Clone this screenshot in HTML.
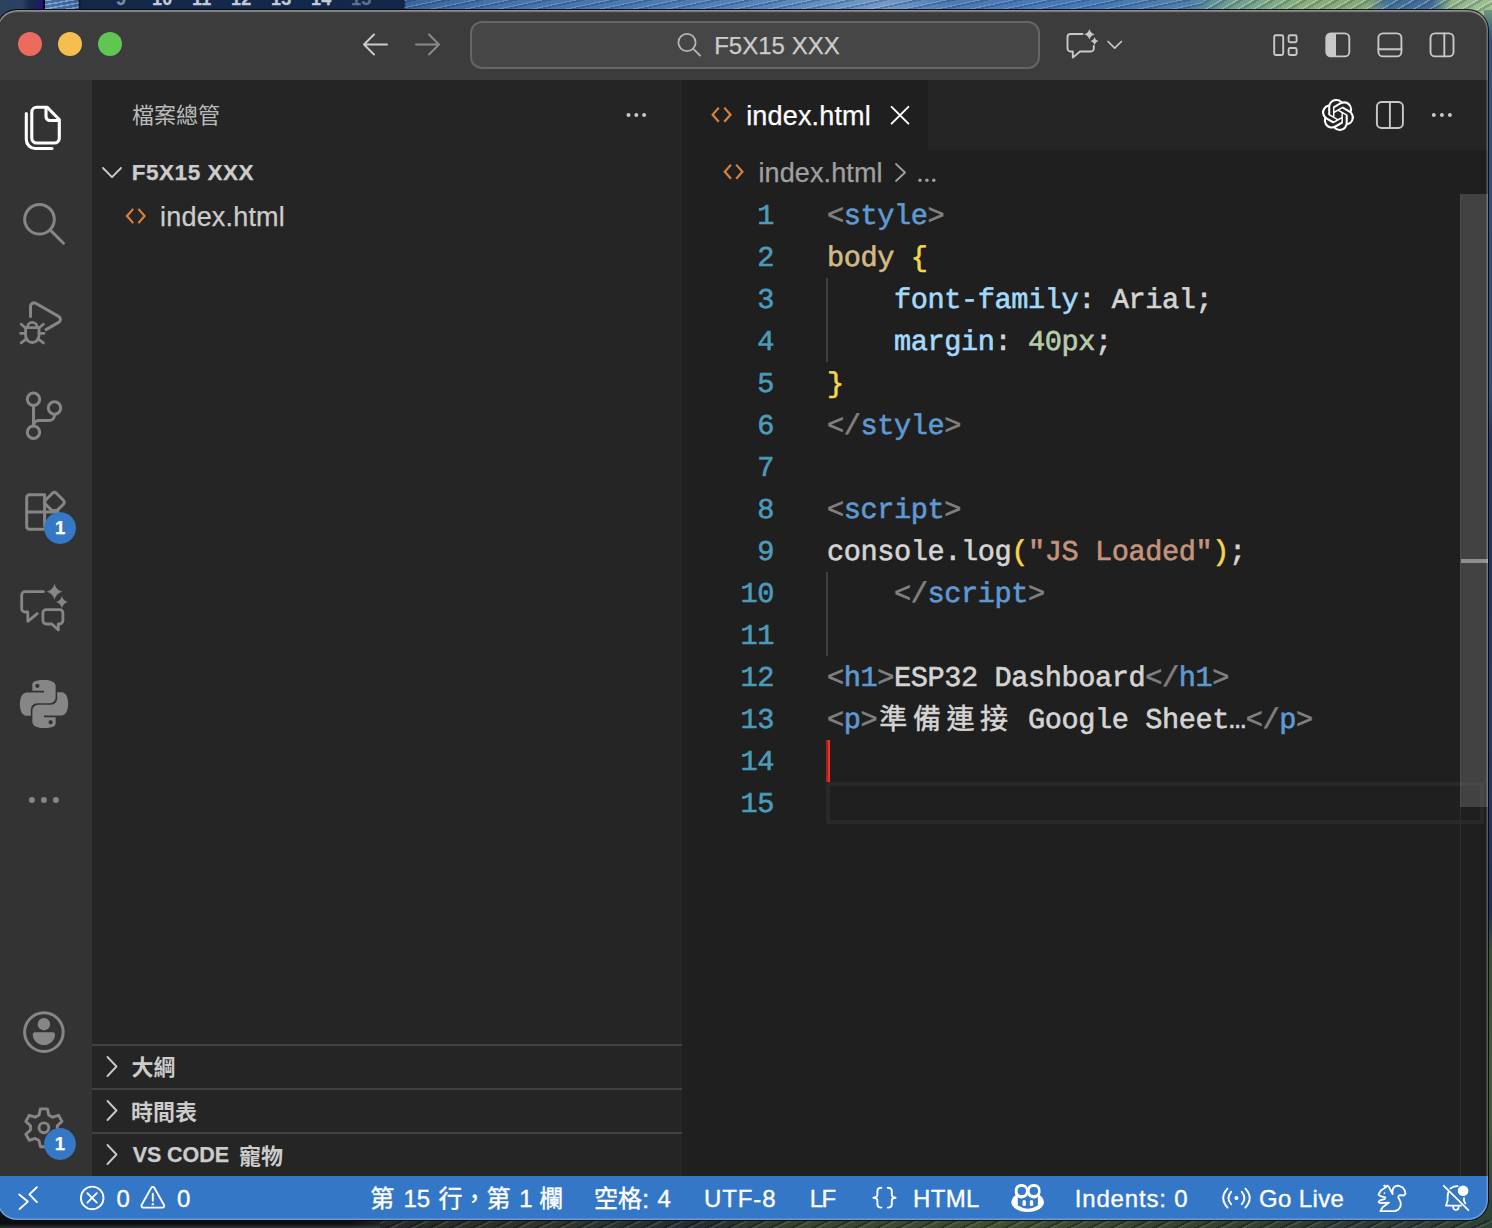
<!DOCTYPE html>
<html lang="zh-Hant">
<head>
<meta charset="utf-8">
<title>index.html — F5X15 XXX</title>
<style>
*{box-sizing:border-box;margin:0;padding:0}
html,body{width:1492px;height:1228px;overflow:hidden;background:#1c2a44;font-family:"Liberation Sans",sans-serif}
.abs{position:absolute}
#desk{position:absolute;left:0;top:0;width:1492px;height:1228px;overflow:hidden}
#win{position:absolute;left:-3px;top:10px;width:1491px;height:1210px;border-radius:20px;overflow:hidden;background:#1f1f1f;box-shadow:0 0 0 1px rgba(0,0,0,.85)}
#in{position:absolute;left:3px;top:0;width:1488px;height:1210px}
#rim{position:absolute;left:0;top:0;width:100%;height:100%;border-radius:20px;box-shadow:inset 0 0 0 1.5px rgba(255,255,255,.27),inset 0 2.2px 0 rgba(255,255,255,.2)}
#title{position:absolute;left:-3px;top:0;width:1491px;height:70px;background:#3c3c3c}
#title>*{margin-left:3px}
.tl{position:absolute;top:22px;width:24px;height:24px;border-radius:50%}
#search{position:absolute;left:470px;top:11px;width:570px;height:48px;border-radius:12px;background:#464646;border:2px solid #656565}
#activity{position:absolute;left:-3px;top:70px;width:95px;height:1096px;background:#333333}
#side{position:absolute;left:92px;top:70px;width:590px;height:1096px;background:#252526}
#sideborder{position:absolute;left:682px;top:70px;width:2px;height:1096px;background:#1f1f1f}
#editor{position:absolute;left:684px;top:70px;width:804px;height:1096px;background:#1f1f1f}
#tabs{position:absolute;left:0;top:0;width:100%;height:70px;background:#252526}
#tab{position:absolute;left:0;top:0;width:244px;height:70px;background:#1f1f1f}
#status{position:absolute;left:-3px;top:1166px;width:1491px;height:44px;background:#3477c7;color:#fff;font-size:24px}
.t{position:absolute;white-space:pre;line-height:1;-webkit-text-stroke-width:0.25px}
.w{-webkit-text-stroke:0.35px #fff}
.h{opacity:0;overflow:hidden;max-width:200px}
.code{position:absolute;left:143px;white-space:pre;font-family:"Liberation Mono",monospace;font-size:28.6px;letter-spacing:-0.41px;line-height:42px;height:42px;color:#d4d4d4;text-rendering:geometricPrecision;-webkit-text-stroke:0.6px}
.ln{position:absolute;left:0;width:90px;text-align:right;font-family:"Liberation Mono",monospace;font-size:28.6px;letter-spacing:-0.41px;line-height:42px;height:42px;color:#4c9bba;text-rendering:geometricPrecision;-webkit-text-stroke:0.6px}
.g{color:#808080}.b{color:#5f99d2}.y{color:#f6d549}.s{color:#d3ba83}.p{color:#a3d9fb}.n{color:#b8cdaa}.o{color:#c5937b}
svg{position:absolute;overflow:visible}
#cjk text{font-family:"Liberation Sans","Noto Sans CJK TC",sans-serif}
</style>
</head>
<body>
<div id="desk">
<!--DESKTOP-->
<div class="abs" style="left:0;top:0;width:1492px;height:40px;background:linear-gradient(90deg,#2d435c 0,#2b4063 22px,#162a4c 30px,#1a2060 38px,#2a0f78 42.5px,#05070c 43px,#05070c 44.5px,#5c88bd 45px,#4470a8 78px,#0c1420 79px,#14294a 81px,#12284a 400px,#10223f 404px,#3a659c 406px,#4573ab 500px,#4a7ab3 650px,#5583ba 760px,#6591c1 830px,#729ac4 885px,#4c7ab5 950px,#4678b6 1100px,#4f7fa8 1190px,#6f9f90 1230px,#8cb07f 1300px,#86aa78 1368px,#45709c 1388px,#3f6a9a 1432px,#93b588 1452px,#a2c192 1492px)"></div>
<div class="abs" style="left:44.5px;top:0;width:34px;height:9px;background:repeating-linear-gradient(170deg,rgba(255,255,255,.25) 0 1.5px,rgba(20,50,110,.25) 1.5px 4px)"></div>
<div class="abs" style="left:404px;top:0;width:800px;height:10px;background:repeating-linear-gradient(168deg,rgba(210,225,240,.22) 0 1.2px,rgba(20,45,95,.28) 1.2px 3px,rgba(0,0,0,0) 3px 7px)"></div>
<div class="abs" style="left:1204px;top:0;width:288px;height:12px;background:repeating-linear-gradient(150deg,rgba(235,245,225,.28) 0 1.5px,rgba(30,70,90,.25) 1.5px 4px,rgba(0,0,0,0) 4px 8px)"></div>
<div class="t" style="left:116px;top:-10.5px;font-size:18px;font-weight:700;color:#7f8da3;letter-spacing:0.2px">9</div>
<div class="t" style="left:152px;top:-10.5px;font-size:18px;font-weight:700;color:#c3cbd6;word-spacing:14.4px;letter-spacing:0.2px">10 11 12 13 14</div>
<div class="t" style="left:351px;top:-10.5px;font-size:18px;font-weight:700;color:#5f6f8a;letter-spacing:0.2px">15</div>
<div class="abs" style="left:1484px;top:10px;width:8px;height:1218px;background:linear-gradient(180deg,#6f957f 0,#2e5183 30px,#2c4f80 380px,#1f3763 430px,#223a66 780px,#1c3058 900px,#3c4e3c 940px,#46583c 1100px,#2c4040 1228px)"></div>
<div class="abs" style="left:0;top:1200px;width:1492px;height:28px;background:linear-gradient(90deg,#0b0f14 0,#0c1015 350px,#232b28 390px,#2c362e 560px,#232d33 700px,#37442f 800px,#404e33 1000px,#34432f 1200px,#2b3b38 1350px,#2f4237 1492px)"></div>
<div class="abs" style="left:380px;top:1220px;width:1112px;height:8px;background:repeating-linear-gradient(155deg,rgba(0,0,0,.3) 0 2px,rgba(150,170,130,.18) 2px 4px,rgba(0,0,0,0) 4px 9px)"></div>
<div class="abs" style="left:0;top:1224px;width:380px;height:4px;background:linear-gradient(180deg,rgba(60,66,60,0),rgba(66,72,66,.7))"></div>

<div id="win">
<div id="in">
<div id="title">
  <div class="tl" style="left:18px;background:#ed6a5e"></div>
  <div class="tl" style="left:58px;background:#f5bf4f"></div>
  <div class="tl" style="left:98px;background:#61c554"></div>
  <div id="search"></div>
  <!--TITLEICONS-->
</div>
<div id="activity">
<!--ACTIVITY-->
</div>
<div id="side">
  <div class="abs" style="left:0;top:964px;width:590px;height:2px;background:#414141"></div>
  <div class="abs" style="left:0;top:1008px;width:590px;height:2px;background:#414141"></div>
  <div class="abs" style="left:0;top:1052px;width:590px;height:2px;background:#414141"></div>
<!--SIDE-->
</div>
<div id="sideborder"></div>
<div id="editor">
  <div id="tabs"><div id="tab"></div></div>
<!--CODE-->
  <div class="ln" style="top:116px">1</div><div class="code" style="top:116px"><span class="g">&lt;</span><span class="b">style</span><span class="g">&gt;</span></div>
  <div class="ln" style="top:158px">2</div><div class="code" style="top:158px"><span class="s">body</span> <span class="y">{</span></div>
  <div class="ln" style="top:200px">3</div><div class="code" style="top:200px">    <span class="p">font-family</span>: Arial;</div>
  <div class="ln" style="top:242px">4</div><div class="code" style="top:242px">    <span class="p">margin</span>: <span class="n">40px</span>;</div>
  <div class="ln" style="top:284px">5</div><div class="code" style="top:284px"><span class="y">}</span></div>
  <div class="ln" style="top:326px">6</div><div class="code" style="top:326px"><span class="g">&lt;/</span><span class="b">style</span><span class="g">&gt;</span></div>
  <div class="ln" style="top:368px">7</div><div class="code" style="top:368px"></div>
  <div class="ln" style="top:410px">8</div><div class="code" style="top:410px"><span class="g">&lt;</span><span class="b">script</span><span class="g">&gt;</span></div>
  <div class="ln" style="top:452px">9</div><div class="code" style="top:452px">console.log<span class="y">(</span><span class="o">"JS Loaded"</span><span class="y">)</span>;</div>
  <div class="ln" style="top:494px">10</div><div class="code" style="top:494px">    <span class="g">&lt;/</span><span class="b">script</span><span class="g">&gt;</span></div>
  <div class="ln" style="top:536px">11</div><div class="code" style="top:536px"></div>
  <div class="ln" style="top:578px">12</div><div class="code" style="top:578px"><span class="g">&lt;</span><span class="b">h1</span><span class="g">&gt;</span>ESP32 Dashboard<span class="g">&lt;/</span><span class="b">h1</span><span class="g">&gt;</span></div>
  <div class="ln" style="top:620px">13</div><div class="code" style="top:620px"><span class="g">&lt;</span><span class="b">p</span><span class="g">&gt;</span><span style="display:inline-block;width:134px"></span> Google Sheet…<span class="g">&lt;/</span><span class="b">p</span><span class="g">&gt;</span></div>
  <div class="ln" style="top:662px">14</div><div class="code" style="top:662px"></div>
  <div class="ln" style="top:704px">15</div><div class="code" style="top:704px"></div>
<!--/CODE-->
  <div class="abs" style="left:142px;top:198px;width:2px;height:84px;background:#404040"></div>
  <div class="abs" style="left:142px;top:492px;width:2px;height:84px;background:#404040"></div>
  <div class="abs" style="left:142px;top:702px;width:658px;height:42px;border:4px solid #292929"></div>
  <div class="abs" style="left:142px;top:660px;width:4px;height:42px;background:linear-gradient(90deg,#a3241a 0,#a3241a 45%,#ea3323 55%,#ea3323 100%)"></div>
  <div class="abs" style="left:776px;top:114px;width:1px;height:982px;background:#2d2d2d"></div>
  <div class="abs" style="left:776px;top:114px;width:28px;height:613px;background:rgba(121,121,121,0.4)"></div>
  <div class="abs" style="left:777px;top:479px;width:27px;height:4px;background:#8e8e8e"></div>
<!--EDITOR-->
</div>
<div id="status">
<!--STATUS-->
</div>
</div>
<div id="rim"></div>
</div>
<!--TX-->
<div id="tx" class="abs" style="left:0;top:0;width:1492px;height:1228px">
<div class="t" style="left:714.2px;top:33.8px;font-size:24px;color:#cccccc;letter-spacing:0.01px">F5X15 XXX</div>
<div class="t" style="left:131.7px;top:162.1px;font-size:22.5px;color:#cccccc;font-weight:700;letter-spacing:0.54px">F5X15 XXX</div>
<div class="t" style="left:160.1px;top:204.0px;font-size:27px;color:#cccccc;letter-spacing:0.18px">index.html</div>
<div class="t" style="left:746.2px;top:102.8px;font-size:27px;color:#ffffff;letter-spacing:0.17px">index.html</div>
<div class="t" style="left:758.4px;top:159.8px;font-size:27px;color:#a0a0a0;letter-spacing:0.13px">index.html</div>
<div class="t" style="left:132.7px;top:1145.2px;font-size:21.5px;color:#cccccc;font-weight:700;letter-spacing:-0.08px">VS CODE</div>
<div class="t w" style="left:116.4px;top:1186.6px;font-size:24px;color:#ffffff">0</div>
<div class="t w" style="left:176.9px;top:1186.6px;font-size:24px;color:#ffffff">0</div>
<div class="t w" style="left:403.4px;top:1186.6px;font-size:24px;color:#ffffff;letter-spacing:0.10px">15</div>
<div class="t w" style="left:519.2px;top:1186.6px;font-size:24px;color:#ffffff">1</div>
<div class="t w" style="left:641.9px;top:1186.6px;font-size:26px;margin-top:-0.8px;color:#ffffff">:</div>
<div class="t w" style="left:657.6px;top:1186.6px;font-size:24px;color:#ffffff">4</div>
<div class="t w" style="left:703.9px;top:1186.5px;font-size:24px;color:#ffffff;letter-spacing:0.93px">UTF-8</div>
<div class="t w" style="left:809.8px;top:1186.5px;font-size:24px;color:#ffffff;letter-spacing:-1.70px">LF</div>
<div class="t w" style="left:913.0px;top:1186.5px;font-size:24px;color:#ffffff;letter-spacing:0.33px">HTML</div>
<div class="t w" style="left:1074.7px;top:1186.5px;font-size:24px;color:#ffffff;letter-spacing:0.84px">Indents: 0</div>
<div class="t w" style="left:1259.1px;top:1186.5px;font-size:24px;color:#ffffff;letter-spacing:0.35px">Go Live</div>
</div>
<div class="t h" style="left:132px;top:104px;font-size:22px">檔案總管</div>
<div class="t h" style="left:132px;top:1056px;font-size:22px">大綱</div>
<div class="t h" style="left:132px;top:1100px;font-size:22px">時間表</div>
<div class="t h" style="left:240px;top:1144px;font-size:22px">寵物</div>
<div class="t h" style="left:371px;top:1186px;font-size:24px">第 15 行，第 1 欄</div>
<div class="t h" style="left:596px;top:1186px;font-size:24px">空格: 4</div>
<div class="t h" style="left:880px;top:705px;font-size:28px">準備連接</div>
<!--/TX-->
<!--CJK-->
<svg id="cjk" width="1492" height="1228" viewBox="0 0 1492 1228" style="left:0;top:0">
<text x="131.97" y="123.46" font-size="22" fill="#bbbbbb">檔案總管</text>
<text x="131.49" y="1075.30" font-size="22" font-weight="700" fill="#cccccc">大綱</text>
<text x="130.91" y="1119.90" font-size="22" font-weight="700" fill="#cccccc">時間表</text>
<text x="238.92" y="1163.78" font-size="22" font-weight="700" fill="#cccccc">寵物</text>
<text x="370.32" y="1207.25" font-size="24" fill="#ffffff" stroke="#ffffff" stroke-width="0.4">第</text>
<text x="438.50" y="1207.25" font-size="24" fill="#ffffff" stroke="#ffffff" stroke-width="0.4">行，第</text>
<text x="539.28" y="1207.06" font-size="24" fill="#ffffff" stroke="#ffffff" stroke-width="0.4">欄</text>
<text x="594.12" y="1207.20" font-size="24" fill="#ffffff" stroke="#ffffff" stroke-width="0.4">空格</text>
<text x="879.32" y="729.10" font-size="28" letter-spacing="5.6" fill="#d4d4d4" stroke="#d4d4d4" stroke-width="0.5">準備連接</text>
</svg>
<!--/CJK-->
<!--OV1-->
<svg id="ov" width="1492" height="1228" viewBox="0 0 1492 1228" style="left:0;top:0" fill="none" stroke-linecap="round" stroke-linejoin="round">
<!-- title bar -->
<g stroke="#cccccc" stroke-width="2">
  <path d="M387 44.5H364M374 34.5L364 44.5L374 54.5"/>
</g>
<g stroke="#8a8a8a" stroke-width="2">
  <path d="M416 44.5H439M429 34.5L439 44.5L429 54.5"/>
</g>
<g stroke="#b4b4b4" stroke-width="1.8">
  <circle cx="687" cy="42.5" r="8.6"/><path d="M693.3 48.8L700 55.5"/>
</g>
<g stroke="#c8c8c8" stroke-width="1.9">
  <path d="M1082.5 34H1070.5a3 3 0 0 0-3 3V48.5a3 3 0 0 0 3 3H1072.8V57.6L1080 51.5H1090.8a3 3 0 0 0 3-3V46"/>
  <path d="M1108 41.5L1114.7 48.2L1121.4 41.5" stroke-width="1.7"/>
  <rect x="1274.2" y="35.2" width="9" height="19.8" rx="1.5"/>
  <rect x="1288.6" y="35.2" width="8" height="7" rx="1.5"/>
  <rect x="1288.6" y="48" width="8" height="7" rx="1.5"/>
  <rect x="1326.3" y="33.4" width="23" height="23" rx="4.5"/>
  <rect x="1378.4" y="33.4" width="23" height="23" rx="4.5"/><path d="M1378.4 49.2H1401.4"/>
  <rect x="1430.5" y="33.4" width="23" height="23" rx="4.5"/><path d="M1444.3 33.4V56.4"/>
</g>
<path d="M1336 33.4H1330.8a4.5 4.5 0 0 0-4.5 4.5V51.9a4.5 4.5 0 0 0 4.5 4.5H1336Z" fill="#c8c8c8"/>
<g fill="#c8c8c8">
  <path d="M1089.4 29.0Q1090.5 33.2 1094.7 34.3Q1090.5 35.4 1089.4 39.6Q1088.3 35.4 1084.1 34.3Q1088.3 33.2 1089.4 29.0Z"/>
  <path d="M1094.5 37.2Q1095.3 40.3 1098.4 41.1Q1095.3 41.9 1094.5 45.0Q1093.7 41.9 1090.6 41.1Q1093.7 40.3 1094.5 37.2Z"/>
</g>
<!-- editor actions -->
<g stroke="#c8c8c8" stroke-width="1.9">
  <rect x="1376.9" y="102" width="26" height="26" rx="4.5"/><path d="M1389.9 102V128"/>
</g>
<g fill="#c8c8c8">
  <circle cx="1433.8" cy="115" r="2"/><circle cx="1441.9" cy="115" r="2"/><circle cx="1449.9" cy="115" r="2"/>
  <circle cx="628.5" cy="115" r="2"/><circle cx="636.3" cy="115" r="2"/><circle cx="644.1" cy="115" r="2"/>
</g>
<!-- tab / breadcrumb / explorer html icons -->
<g stroke="#d9813f" stroke-width="2.2" stroke-linecap="butt" stroke-linejoin="miter">
  <path d="M718.8 107.6L712.6 114.7L718.8 121.8M724.3 107.6L730.5 114.7L724.3 121.8"/>
  <path d="M731 164.6L724.8 171.7L731 178.8M736.2 164.6L742.4 171.7L736.2 178.8"/>
  <path d="M133.2 208.9L127 216L133.2 223.1M138.4 208.9L144.6 216L138.4 223.1"/>
</g>
<g stroke="#ffffff" stroke-width="1.9"><path d="M891.6 106.8L908.4 123.6M908.4 106.8L891.6 123.6"/></g>
<g stroke="#a0a0a0" stroke-width="1.8"><path d="M896 164L905 172.5L896 181"/></g>
<g fill="#a0a0a0"><circle cx="920" cy="180.3" r="1.7"/><circle cx="926.9" cy="180.3" r="1.7"/><circle cx="933.8" cy="180.3" r="1.7"/></g>
<!-- sidebar chevrons -->
<g stroke="#c8c8c8" stroke-width="1.9">
  <path d="M103 168L112 177.2L121 168"/>
  <path d="M107.5 1057L116.5 1066.5L107.5 1076"/>
  <path d="M107.5 1101L116.5 1110.5L107.5 1120"/>
  <path d="M107.5 1145L116.5 1154.5L107.5 1164"/>
</g>
</svg>
<!--/OV1-->
<!--OV2-->
<svg id="ov2" width="1492" height="1228" viewBox="0 0 1492 1228" style="left:0;top:0" fill="none" stroke-linecap="round" stroke-linejoin="round">
<!-- explorer (active) -->
<g stroke="#ffffff" stroke-width="3.1">
  <path d="M47 107.2H36.8a5 5 0 0 0-5 5V138a5 5 0 0 0 5 5H54.3a5 5 0 0 0 5-5V119.5Z"/>
  <path d="M46 108V116.5a4 4 0 0 0 4 4H58.5"/>
  <path d="M26.3 113.5V139.5a9 9 0 0 0 9 9H52"/>
</g>
<g stroke="#868686" stroke-width="3">
  <circle cx="39.5" cy="219.3" r="14.8"/><path d="M50.3 230.1L63.5 243.3"/>
  <!-- debug -->
  <path d="M30.5 316.5V306.3a3.5 3.5 0 0 1 5.2-3L58.6 316.4a3.4 3.4 0 0 1 0 6L46 329.6"/>
  <path d="M25.6 327.6H39V335.8a6.7 6.7 0 0 1-13.4 0Z" stroke-width="2.8"/>
  <path d="M27.6 327a4.7 4.7 0 0 1 9.4 0" stroke-width="2.8"/>
  <path d="M21.2 324.2L25.6 328M43.4 324.2L39 328M20.6 333.3H25.4M39.2 333.3H44M21.2 342.8L26.8 338.6M43.4 342.8L37.8 338.6" stroke-width="2.8"/>
  <!-- scm -->
  <circle cx="33.5" cy="399.2" r="6.2"/><circle cx="54.5" cy="408" r="6.2"/><circle cx="33.5" cy="432.2" r="6.2"/>
  <path d="M33.5 405.6V425.8M54.5 414.4V415a5.5 5.5 0 0 1-5.5 5.5H39a5.5 5.5 0 0 0-5.5 5.5"/>
  <!-- extensions -->
  <path d="M44.6 494.8H29.5a2.8 2.8 0 0 0-2.8 2.8V526.4a2.8 2.8 0 0 0 2.8 2.8H46M44.6 494.8V526M26.7 512H58"/>
  <path d="M52.4 493.2a2.8 2.8 0 0 1 4 0L63.4 500.2a2.8 2.8 0 0 1 0 4L57 510.6H52L45.4 504.2a2.8 2.8 0 0 1 0-4Z"/>
  <!-- chat -->
  <path d="M43.5 591.7H25a3.3 3.3 0 0 0-3.3 3.3V608.7a3.3 3.3 0 0 0 3.3 3.3H27.8V621.3L37.2 613.6" stroke-width="2.8"/>
  <path d="M46.3 609.6H59.5a3.4 3.4 0 0 1 3.4 3.4V620.6a3.4 3.4 0 0 1-3.4 3.4H58.3V630L51.8 624H46.3a3.4 3.4 0 0 1-3.4-3.4V613a3.4 3.4 0 0 1 3.4-3.4Z" stroke-width="2.8"/>
  <!-- account -->
  <circle cx="43.9" cy="1032.1" r="19.3"/>
  <!-- gear -->
  <path d="M39.0 1115.1L40.4 1108.9L47.4 1108.9L48.8 1115.1L52.5 1117.2L58.5 1115.3L62.0 1121.4L57.3 1125.7L57.3 1129.9L62.0 1134.2L58.5 1140.3L52.5 1138.4L48.8 1140.5L47.4 1146.7L40.4 1146.7L39.0 1140.5L35.3 1138.4L29.3 1140.3L25.8 1134.2L30.5 1129.9L30.5 1125.7L25.8 1121.4L29.3 1115.3L35.3 1117.2Z" stroke-width="2.9"/>
  <circle cx="43.9" cy="1127.8" r="4.9" stroke-width="2.9"/>
</g>
<g fill="#868686">
  <path d="M54.5 583.7Q56.1 590.1 62.5 591.7Q56.1 593.3 54.5 599.7Q52.9 593.3 46.5 591.7Q52.9 590.1 54.5 583.7Z"/>
  <path d="M61.9 596.0Q63.1 600.9 68.0 602.1Q63.1 603.3 61.9 608.2Q60.7 603.3 55.8 602.1Q60.7 600.9 61.9 596.0Z"/>
  <circle cx="31.9" cy="800" r="3"/><circle cx="43.9" cy="800" r="3"/><circle cx="55.9" cy="800" r="3"/>
  <circle cx="43.9" cy="1024.2" r="6.2"/>
  <path d="M35 1032.3H52.8a2.2 2.2 0 0 1 2.2 2.2a11.1 10.6 0 0 1-22.2 0a2.2 2.2 0 0 1 2.2-2.2Z"/>
  <!-- python -->
  <g transform="translate(20 680) scale(2)"><path d="M14.25.18l.9.2.73.26.59.3.45.32.34.34.25.34.16.33.1.3.04.26.02.2-.01.13V8.5l-.05.63-.13.55-.21.46-.26.38-.3.31-.33.25-.35.19-.35.14-.33.1-.3.07-.26.04-.21.02H8.77l-.69.05-.59.14-.5.22-.41.27-.33.32-.27.35-.2.36-.15.37-.1.35-.07.32-.04.27-.02.21v3.06H3.17l-.21-.03-.28-.07-.32-.12-.35-.18-.36-.26-.36-.36-.35-.46-.32-.59-.28-.73-.21-.88-.14-1.05-.05-1.23.06-1.22.16-1.04.24-.87.32-.71.36-.57.4-.44.42-.33.42-.24.4-.16.36-.1.32-.05.24-.01h.16l.06.01h8.16v-.83H6.18l-.01-2.75-.02-.37.05-.34.11-.31.17-.28.25-.26.31-.23.38-.2.44-.18.51-.15.58-.12.64-.1.71-.06.77-.04.84-.02 1.27.05zm-6.3 1.98l-.23.33-.08.41.08.41.23.34.33.22.41.09.41-.09.33-.22.23-.34.08-.41-.08-.41-.23-.33-.33-.22-.41-.09-.41.09zm13.09 3.95l.28.06.32.12.35.18.36.27.36.35.35.47.32.59.28.73.21.88.14 1.04.05 1.23-.06 1.23-.16 1.04-.24.86-.32.71-.36.57-.4.45-.42.33-.42.24-.4.16-.36.09-.32.05-.24.02-.16-.01h-8.22v.82h5.84l.01 2.76.02.36-.05.34-.11.31-.17.29-.25.25-.31.24-.38.2-.44.17-.51.15-.58.13-.64.09-.71.07-.77.04-.84.01-1.27-.04-1.07-.14-.9-.2-.73-.25-.59-.3-.45-.33-.34-.34-.25-.34-.16-.33-.1-.3-.04-.25-.02-.2.01-.13v-5.34l.05-.64.13-.54.21-.46.26-.38.3-.32.33-.24.35-.2.35-.14.33-.1.3-.06.26-.04.21-.02.13-.01h5.84l.69-.05.59-.14.5-.21.41-.28.33-.32.27-.35.2-.36.15-.36.1-.35.07-.32.04-.28.02-.21V6.07h2.09l.14.01zm-6.47 14.25l-.23.33-.08.41.08.41.23.33.33.23.41.08.41-.08.33-.23.23-.33.08-.41-.08-.41-.23-.33-.33-.23-.41-.08-.41.08z"/></g>
</g>
<!-- badges -->
<circle cx="60.1" cy="528.1" r="15.9" fill="#3478c6"/>
<circle cx="60" cy="1144" r="15.9" fill="#3478c6"/>
</svg>
<!--/OV2-->
<!--OV3-->
<svg id="ov3" width="1492" height="1228" viewBox="0 0 1492 1228" style="left:0;top:0" fill="none" stroke-linecap="round" stroke-linejoin="round">
<g stroke="#ffffff" stroke-width="1.9">
  <path d="M19.2 1194.6L27.8 1201.6L19.6 1209M36.8 1187.2L29.4 1194.4L36.8 1202"/>
  <circle cx="92.2" cy="1197.9" r="11.3"/><path d="M87.4 1193.2L96.8 1202.6M96.8 1193.2L87.4 1202.6"/>
  <path d="M151.2 1187.9a1.8 1.8 0 0 1 3.2 0L164 1205a1.8 1.8 0 0 1-1.6 2.6H143.2a1.8 1.8 0 0 1-1.6-2.6Z"/>
  <path d="M152.8 1193.8V1200.8"/>
  <path d="M881.4 1187.8Q877.4 1187.8 877.4 1191.2V1194.6Q877.4 1197.7 873.4 1197.7Q877.4 1197.7 877.4 1200.8V1204.2Q877.4 1207.6 881.4 1207.6"/>
  <path d="M887.8 1187.8Q891.8 1187.8 891.8 1191.2V1194.6Q891.8 1197.7 895.6 1197.7Q891.8 1197.7 891.8 1200.8V1204.2Q891.8 1207.6 887.8 1207.6"/>
  <path d="M1227.5 1188.6Q1218.9 1198 1227.5 1207.5M1231.1 1191.8Q1225.9 1198 1231.1 1204.2M1245.4 1188.6Q1254 1198 1245.4 1207.5M1241.8 1191.8Q1247 1198 1241.8 1204.2"/>
  <path d="M1389.0 1186.9L1387.1 1185.6L1386.0 1187.3L1384.3 1185.4L1384.9 1188.0L1381.1 1190.3L1379.1 1193.3L1378.5 1195.0L1381.5 1196.3L1385.3 1197.4L1384.5 1199.1L1380.0 1200.4L1378.6 1201.9L1380.0 1203.2L1389.0 1202.6L1386.0 1204.7L1382.6 1207.2L1380.4 1211.1L1395.0 1211.1L1398.4 1209.6L1400.5 1206.4L1400.8 1203.0L1399.7 1200.0L1398.2 1197.4L1399.0 1195.5L1401.0 1195.2L1403.9 1195.5L1405.5 1193.6L1404.8 1190.5L1402.5 1187.4L1398.8 1185.7L1395.8 1185.9L1393.7 1187.4L1392.5 1190.3L1392.6 1194.0L1391.3 1191.6L1389.8 1188.6Z" stroke-width="1.8"/>
  <path d="M1443.8 1185.8L1468.4 1210.2" stroke-width="1.8"/>
  <path d="M1450.4 1188.4Q1453.5 1186.2 1457.6 1186.2M1448.5 1191.8Q1447.6 1194 1447.6 1197V1200.4L1446 1205.7H1461M1464 1198.2V1200.8L1465.3 1203.4M1453.2 1207.2a2.7 2.7 0 0 0 5.4 0" stroke-width="1.8"/>
</g>
<g fill="#ffffff">
  <circle cx="152.8" cy="1204.2" r="1.2"/>
  <circle cx="1236.45" cy="1198" r="2.05"/>
  <circle cx="1384.5" cy="1193.1" r="0.9"/>
  <circle cx="1463.1" cy="1190.8" r="5.3"/>
  <!-- copilot -->
  <path d="M1015 1195.5C1012.4 1197.8 1011.4 1200 1011.4 1202.4C1011.4 1206.8 1018 1212 1027.65 1212C1037.3 1212 1043.9 1206.8 1043.9 1202.4C1043.9 1200 1042.9 1197.8 1040.3 1195.5Z"/>
</g>
<path d="M1017.8 1194H1037.9V1205.6Q1027.85 1211.8 1017.8 1205.6Z" fill="#3478c6"/>
<g fill="#ffffff">
  <rect x="1014.8" y="1183.9" width="13.4" height="14.5" rx="6.2"/>
  <rect x="1027.1" y="1183.9" width="13.4" height="14.5" rx="6.2"/>
  <rect x="1022.5" y="1200" width="3.4" height="6.1" rx="1.7"/>
  <rect x="1029.8" y="1200" width="3.4" height="6.1" rx="1.7"/>
</g>
<g fill="#3478c6">
  <rect x="1017.6" y="1186.9" width="8.3" height="8" rx="3.6"/>
  <rect x="1029.7" y="1186.9" width="8.3" height="8" rx="3.6"/>
</g>
<!-- openai -->
<g transform="translate(1321.9 98.9) scale(1.3375)" fill="#ffffff"><path d="M22.2819 9.8211a5.9847 5.9847 0 0 0-.5157-4.9108 6.0462 6.0462 0 0 0-6.5098-2.9A6.0651 6.0651 0 0 0 4.9807 4.1818a5.9847 5.9847 0 0 0-3.9977 2.9 6.0462 6.0462 0 0 0 .7427 7.0966 5.98 5.98 0 0 0 .511 4.9107 6.051 6.051 0 0 0 6.5146 2.9001A5.9847 5.9847 0 0 0 13.2599 24a6.0557 6.0557 0 0 0 5.7718-4.2058 5.9894 5.9894 0 0 0 3.9977-2.9001 6.0557 6.0557 0 0 0-.7475-7.0729zm-9.022 12.6081a4.4755 4.4755 0 0 1-2.8764-1.0408l.1419-.0804 4.7783-2.7582a.7948.7948 0 0 0 .3927-.6813v-6.7369l2.02 1.1686a.071.071 0 0 1 .038.052v5.5826a4.504 4.504 0 0 1-4.4945 4.4944zm-9.6607-4.1254a4.4708 4.4708 0 0 1-.5346-3.0137l.142.0852 4.783 2.7582a.7712.7712 0 0 0 .7806 0l5.8428-3.3685v2.3324a.0804.0804 0 0 1-.0332.0615L9.74 19.9502a4.4992 4.4992 0 0 1-6.1408-1.6464zM2.3408 7.8956a4.485 4.485 0 0 1 2.3655-1.9728V11.6a.7664.7664 0 0 0 .3879.6765l5.8144 3.3543-2.0201 1.1685a.0757.0757 0 0 1-.071 0l-4.8303-2.7865A4.504 4.504 0 0 1 2.3408 7.872zm16.5963 3.8558L13.1038 8.364 15.1192 7.2a.0757.0757 0 0 1 .071 0l4.8303 2.7913a4.4944 4.4944 0 0 1-.6765 8.1042v-5.6772a.79.79 0 0 0-.407-.667zm2.0107-3.0231l-.142-.0852-4.7735-2.7818a.7759.7759 0 0 0-.7854 0L9.409 9.2297V6.8974a.0662.0662 0 0 1 .0284-.0615l4.8303-2.7866a4.4992 4.4992 0 0 1 6.6802 4.66zM8.3065 12.863l-2.02-1.1638a.0804.0804 0 0 1-.038-.0567V6.0742a4.4992 4.4992 0 0 1 7.3757-3.4537l-.142.0805L8.704 5.459a.7948.7948 0 0 0-.3927.6813zm1.0976-2.3654l2.602-1.4998 2.6069 1.4998v2.9994l-2.5974 1.4997-2.6067-1.4997Z"/></g>
</svg>
<!--/OV3-->
<div class="abs" style="left:0;top:0">
<div class="t" style="left:44.1px;top:518.6px;width:32px;text-align:center;font-size:18.5px;font-weight:700;color:#fff">1</div>
<div class="t" style="left:44px;top:1134.5px;width:32px;text-align:center;font-size:18.5px;font-weight:700;color:#fff">1</div>
</div>
</div>
</body>
</html>
